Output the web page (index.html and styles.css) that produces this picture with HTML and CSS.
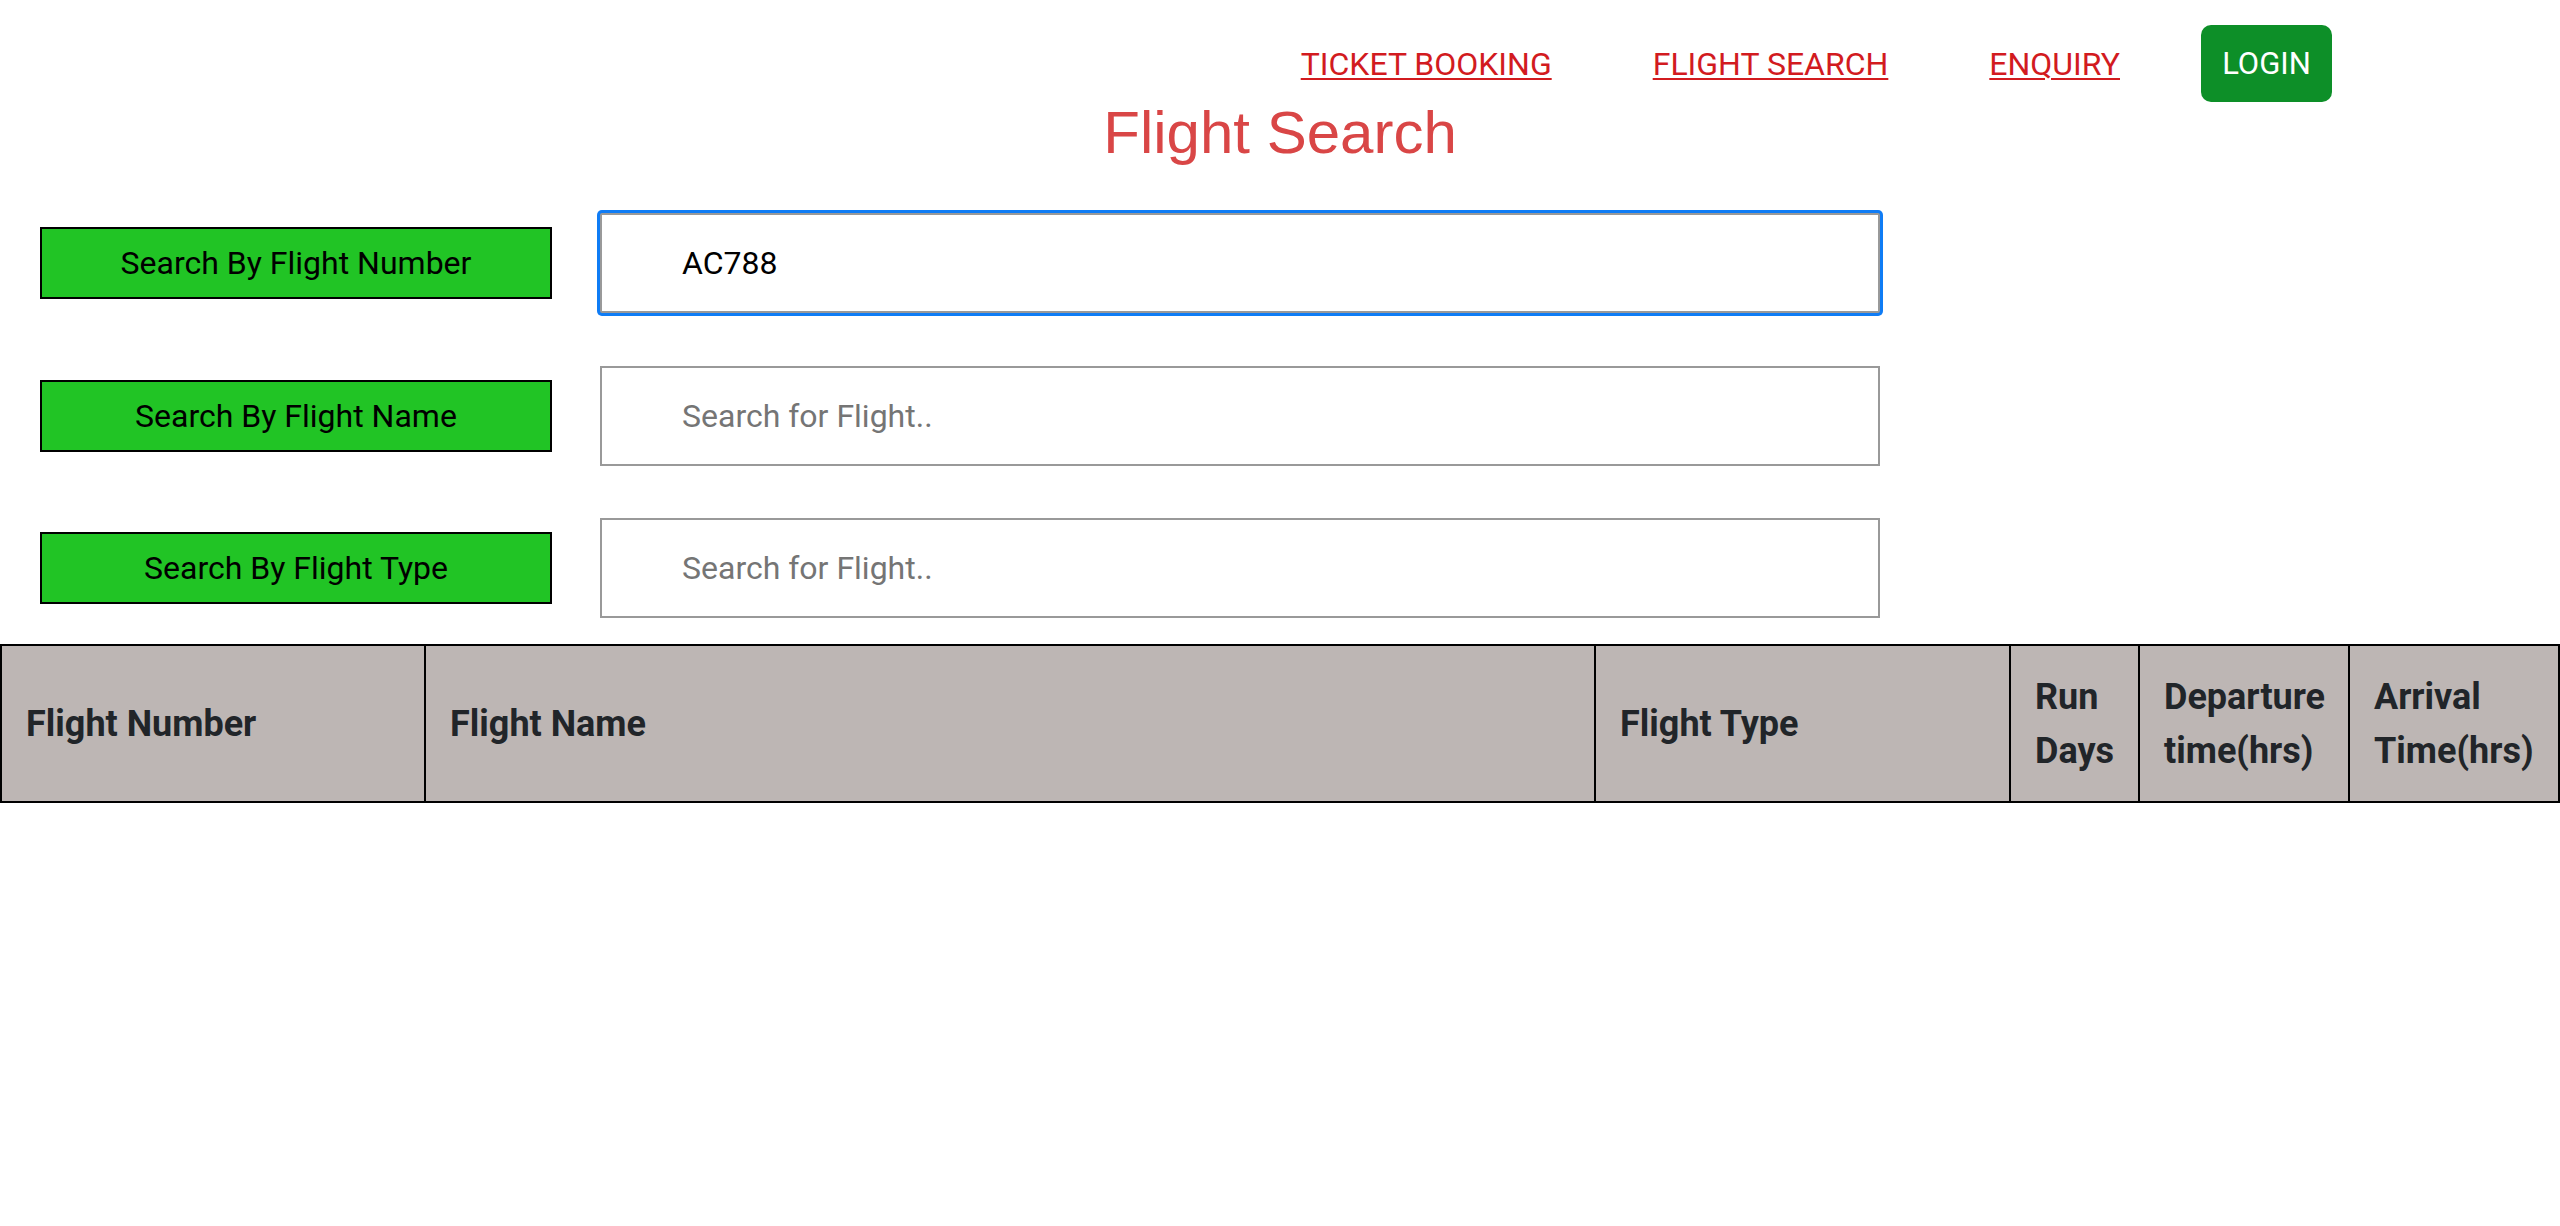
FILE: index.html
```html
<!DOCTYPE html>
<html lang="en">
<head>
<meta charset="utf-8">
<title>Flight Search</title>
<link rel="stylesheet" href="styles.css">
</head>
<body>
<header class="topbar">
  <nav class="nav">
    <a class="nav-link" href="#">TICKET BOOKING</a>
    <a class="nav-link" href="#">FLIGHT SEARCH</a>
    <a class="nav-link nav-link-last" href="#">ENQUIRY</a>
    <button class="login-btn" type="button">LOGIN</button>
  </nav>
  <h1 class="page-title">Flight Search</h1>
</header>
<main>
  <section class="search-form">
    <div class="search-row">
      <button class="search-btn" type="button">Search By Flight Number</button>
      <input class="search-input is-focused" type="text" value="AC788" placeholder="Search for Flight..">
    </div>
    <div class="search-row">
      <button class="search-btn" type="button">Search By Flight Name</button>
      <input class="search-input" type="text" placeholder="Search for Flight..">
    </div>
    <div class="search-row">
      <button class="search-btn" type="button">Search By Flight Type</button>
      <input class="search-input" type="text" placeholder="Search for Flight..">
    </div>
  </section>
  <table class="flights">
    <thead>
      <tr>
        <th class="c-num">Flight Number</th>
        <th class="c-name">Flight Name</th>
        <th class="c-type">Flight Type</th>
        <th class="c-run">Run Days</th>
        <th class="c-dep">Departure time(hrs)</th>
        <th class="c-arr">Arrival Time(hrs)</th>
      </tr>
    </thead>
    <tbody></tbody>
  </table>
</main>
</body>
</html>
```

FILE: styles.css
```css
html, body {
  margin: 0;
  padding: 0;
  background: #ffffff;
}

body {
  font-family: Roboto, "Liberation Sans", Arial, sans-serif;
  color: #212529;
}

.topbar {
  padding-top: 25px;
}

.nav {
  display: flex;
  justify-content: flex-end;
  align-items: center;
  height: 77px;
  padding-right: 228px;
}

.nav-link {
  font-family: Roboto, sans-serif;
  font-size: 32px;
  color: #d21b1f;
  text-decoration: underline;
  text-decoration-thickness: 2px;
  text-underline-offset: 3px;
  margin-right: 101px;
}

.nav-link-last {
  margin-right: 81px;
}

.login-btn {
  width: 131px;
  height: 77px;
  border: none;
  border-radius: 10px;
  background: #0d8f28;
  color: #ffffff;
  font-family: Roboto, sans-serif;
  font-size: 31px;
  padding: 0;
}

.page-title {
  margin: 1px 0 0 0;
  font-family: "Liberation Sans", Arial, sans-serif;
  font-weight: normal;
  font-size: 60px;
  line-height: 60px;
  color: #d94646;
  text-align: center;
}

.search-form {
  display: flex;
  flex-direction: column;
  gap: 52.5px;
  margin-top: 50px;
  padding-left: 40px;
}

.search-row {
  display: flex;
  align-items: center;
  gap: 48px;
}

.search-btn {
  box-sizing: border-box;
  width: 512px;
  height: 72px;
  margin: 0;
  padding: 0;
  border: 2px solid #000000;
  background: #21c425;
  color: #000000;
  font-family: Roboto, sans-serif;
  font-size: 32px;
  text-align: center;
}

.search-input {
  box-sizing: border-box;
  width: 1280px;
  height: 100px;
  margin: 0;
  padding: 0 20px 0 80px;
  border: 2px solid #999999;
  border-radius: 0;
  background: #ffffff;
  color: #000000;
  font-family: Roboto, sans-serif;
  font-size: 32px;
  outline: none;
}

.search-input::placeholder {
  color: #757575;
}

.search-input.is-focused {
  box-shadow: 0 0 0 3px #0f7cf5;
  border-radius: 2px;
}

.flights {
  width: 100%;
  margin-top: 26px;
  table-layout: fixed;
  border-collapse: separate;
  border-spacing: 0;
  border: 2px solid #000000;
}

.flights th {
  box-sizing: border-box;
  background: #bdb6b4;
  color: #212529;
  font-family: Roboto, sans-serif;
  font-weight: bold;
  font-size: 36px;
  line-height: 54px;
  text-align: left;
  vertical-align: middle;
  padding: 24px 24px 23px 24px;
  border-left: 2px solid #000000;
}

.flights th.c-num {
  border-left: none;
  width: 422px;
}

.flights th.c-name { width: 1170px; }
.flights th.c-type { width: 415px; }
.flights th.c-run { width: 129px; }
.flights th.c-dep { width: 210px; }
.flights th.c-arr { width: 210px; }
```
